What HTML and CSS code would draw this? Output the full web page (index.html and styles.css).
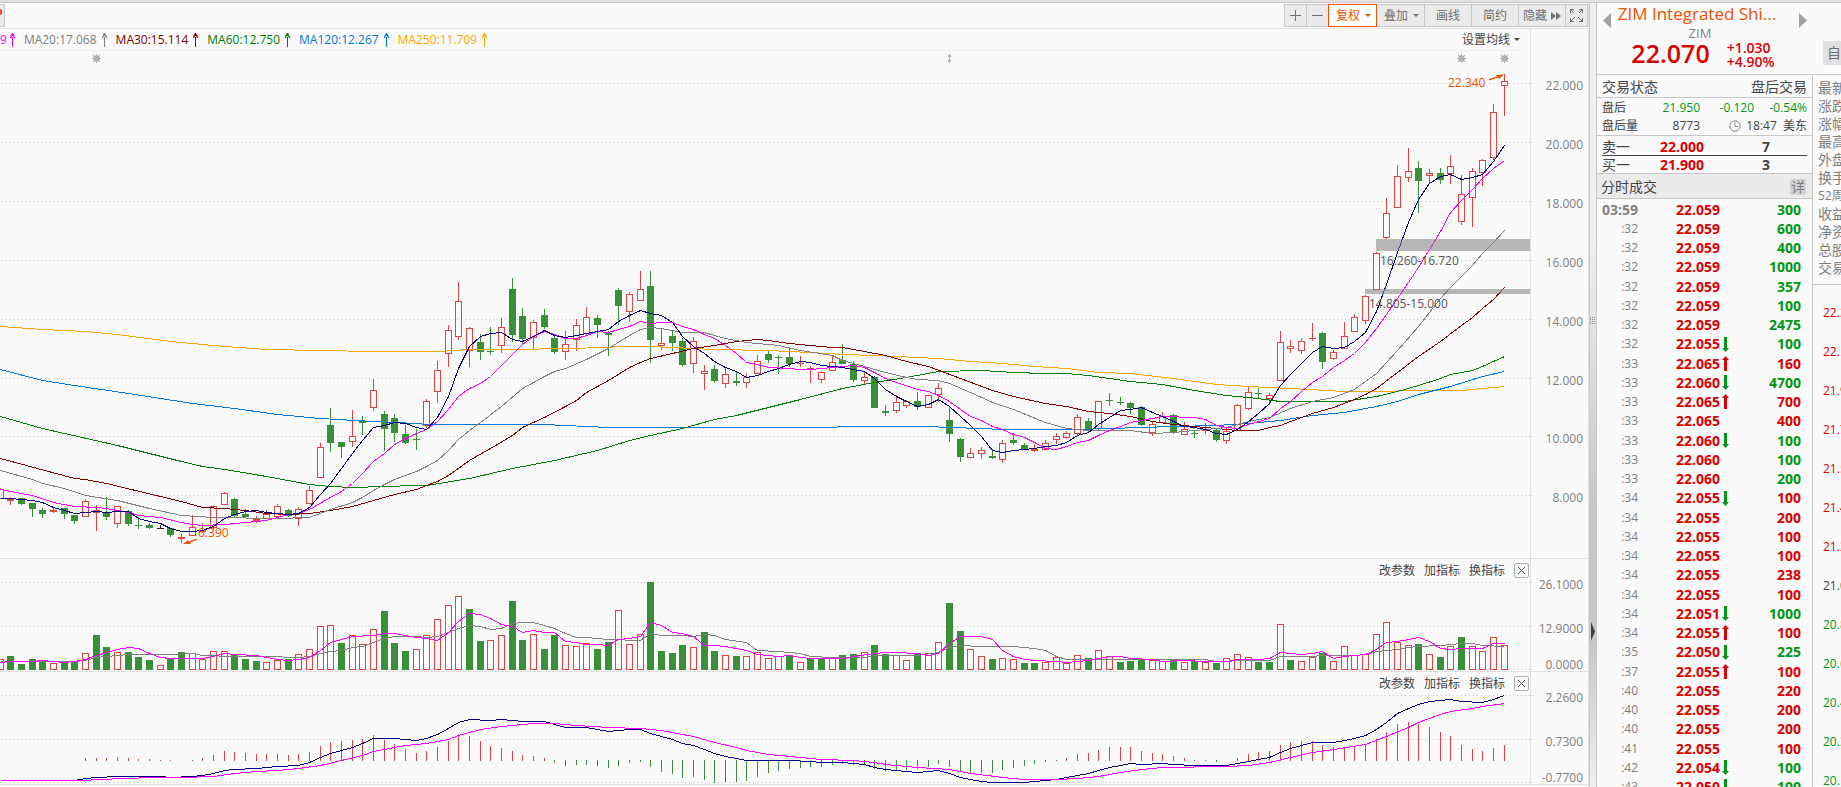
FILE: index.html
```html
<!DOCTYPE html>
<html lang="zh-CN">
<head>
<meta charset="utf-8">
<title>ZIM Integrated Shipping - 日K</title>
<link rel="stylesheet" href="styles.css">
</head>
<body>
<div class="topbar"></div>
<main class="app">
  <section class="charts">
    <div class="toolbar">
      <button class="tool tool-stub" aria-label="周期"><span class="dot"></span></button>
      <div class="tools">
        <button class="tool tool-icon" aria-label="放大"><svg width="11" height="11"><path d="M0 5.5H11M5.5 0V11"/></svg></button>
        <button class="tool tool-icon" aria-label="缩小"><svg width="11" height="11"><path d="M0 5.5H11"/></svg></button>
        <button class="tool tool-wide tool-active">复权<span class="caret"></span></button>
        <button class="tool tool-wide">叠加<span class="caret"></span></button>
        <button class="tool">画线</button>
        <button class="tool">简约</button>
        <button class="tool tool-hide">隐藏<svg width="10" height="8"><path class="fill" d="M0 0L5 4L0 8ZM5 0L10 4L5 8Z"/></svg></button>
        <button class="tool tool-icon" aria-label="全屏"><svg width="13" height="13"><path d="M.5 4V.5H4M.5 .5L4.500 4.500M9 .5H12.500V4M12.500 .5L8.500 4.500M.5 9V12.500H4M.5 12.500L4.500 8.500M9 12.500H12.500V9M12.500 12.500L8.500 8.500"/></svg></button>
      </div>
    </div>
    <div class="pane">
      <div class="pane-head legend">
        <div class="legend-row">
          <span class="ma m10">9<svg width="6" height="14"><use href="#up"/></svg></span>
          <span class="ma m20">MA20:17.068<svg width="6" height="14"><use href="#up"/></svg></span>
          <span class="ma m30">MA30:15.114<svg width="6" height="14"><use href="#up"/></svg></span>
          <span class="ma m60">MA60:12.750<svg width="6" height="14"><use href="#up"/></svg></span>
          <span class="ma m120">MA120:12.267<svg width="6" height="14"><use href="#up"/></svg></span>
          <span class="ma m250">MA250:11.709<svg width="6" height="14"><use href="#up"/></svg></span>
          <button class="link ma-set">设置均线<span class="caret"></span></button>
        </div>
      </div>
      <div class="plot"><svg id="price" width="1588" height="507" viewBox="0 51 1588 507"></svg></div>
    </div>
    <div class="pane">
      <div class="pane-head">
        <button class="link">改参数</button><button class="link">加指标</button><button class="link">换指标</button>
        <button class="close" aria-label="关闭"><svg width="9" height="9"><path d="M1 1L8 8M8 1L1 8"/></svg></button>
      </div>
      <div class="plot"><svg id="volume" width="1588" height="90" viewBox="0 581 1588 90"></svg></div>
    </div>
    <div class="pane">
      <div class="pane-head">
        <button class="link">改参数</button><button class="link">加指标</button><button class="link">换指标</button>
        <button class="close" aria-label="关闭"><svg width="9" height="9"><path d="M1 1L8 8M8 1L1 8"/></svg></button>
      </div>
      <div class="plot"><svg id="macd" width="1588" height="90" viewBox="0 694 1588 90"></svg></div>
    </div>
  </section>

  <div class="splitter">
    <svg class="grip" width="5" height="8"><path d="M.5 0V8M2.500 0V8M4.500 0V8"/></svg>
    <svg class="fold" width="4" height="19"><path d="M0 0L4 9.500L0 19Z"/></svg>
  </div>

  <aside class="side">
    <header class="quote-head">
      <button class="nav" aria-label="上一个"><svg width="8" height="15"><path d="M8 0V15L0 7.500Z"/></svg></button>
      <div class="quote">
        <h1>ZIM Integrated Shi...</h1>
        <div class="code">ZIM</div>
        <div class="last"><strong>22.070</strong><div class="chg"><span>+1.030</span><span>+4.90%</span></div></div>
      </div>
      <button class="nav" aria-label="下一个"><svg width="8" height="15"><path d="M0 0V15L8 7.500Z"/></svg></button>
      <button class="watch">自选</button>
    </header>
    <div class="side-body">
      <div class="book">
        <div class="status"><span>交易状态</span><span>盘后交易</span></div>
        <div class="after">
          <span>盘后</span><span class="down num">21.950</span><span class="down num">-0.120</span><span class="down num">-0.54%</span>
          <span>盘后量</span><span class="num">8773</span>
          <span class="clock num"><svg width="12" height="12"><circle cx="6" cy="6" r="5.200"/><path d="M6 2.500V6.500H9"/></svg>18:47&nbsp; 美东</span>
        </div>
        <div class="level"><span>卖一</span><b class="up">22.000</b><b>7</b></div>
        <div class="level level-bid"><span>买一</span><b class="up">21.900</b><b>3</b></div>
        <div class="ticks-head"><span>分时成交</span><button>详</button></div>
        <table class="ticks">
          <colgroup><col class="c-time"><col class="c-price"><col class="c-dir"><col></colgroup>
          <tbody id="ticks"></tbody>
        </table>
      </div>
      <div class="extra">
        <ul class="facts"><li>最新</li><li>涨跌</li><li>涨幅</li><li>最高</li><li>外盘</li><li>换手</li><li class="latin">52周</li><li>收益</li><li>净资</li><li>总股</li><li>交易</li></ul>
        <ul class="scale">
          <li class="up">22.330</li><li class="up">22.146</li><li class="up">21.962</li><li class="up">21.777</li><li class="up">21.593</li><li class="up">21.409</li><li class="up">21.224</li><li>21.040</li>
          <li class="down">20.856</li><li class="down">20.671</li><li class="down">20.487</li><li class="down">20.303</li><li class="down">20.118</li>
        </ul>
      </div>
    </div>
  </aside>
</main>
<svg class="defs" width="0" height="0"><defs>
  <symbol id="up" viewBox="0 0 6 14"><path d="M2 4H3V14H2Z"/><path d="M2 0H3L5.500 5H4L3 3H2L1 5H-.5Z"/></symbol>
</defs></svg>
<script src="chart.js"></script>
</body>
</html>
```
FILE: styles.css
```css
* { box-sizing: border-box; }
body {
  margin: 0; height: 100vh; overflow: hidden; display: flex; flex-direction: column;
  background: #fafafa; color: #444;
  font: 12px/16px "Open Sans", "Noto Sans CJK SC", sans-serif;
}
button { font: inherit; color: inherit; margin: 0; padding: 0; border: 0; background: none; }
ul { list-style: none; margin: 0; padding: 0; }
svg { display: block; flex: none; }
.defs { position: absolute; }
.up { color: #dc0000; }
.down { color: #009614; }
.topbar { flex: none; height: 3px; background: #e1e1e1; border-bottom: 1px solid #c8c8c8; }
.app { flex: 1; display: flex; min-height: 0; }

.charts { flex: 1; min-width: 0; border-right: 1px solid #e1e1e1; overflow: hidden; }
.toolbar { height: 26px; display: flex; justify-content: space-between; align-items: center; border-bottom: 1px solid #e4e4e4; }
.tools { display: flex; }
.tool {
  height: 23px; width: 48px; margin-left: -1px; display: flex; align-items: center; justify-content: center; gap: 5px;
  background: #ebebeb; border: 1px solid #c8c8c8; color: #707070; font-size: 12px;
}
.tool svg path { fill: none; stroke: #707070; shape-rendering: crispEdges; }
.tool svg path.fill { fill: #707070; stroke: none; shape-rendering: auto; }
.tool-icon { width: 23px; }
.tool-wide { width: 49px; padding-left: 2px; }
.tool-hide { gap: 4px; }
.tool-active { background: #fff; border-color: #f05000; color: #f05000; position: relative; }
.tool-stub { width: 5px; margin: 0; border-left: 0; justify-content: flex-start; align-items: flex-start; }
.dot { width: 2px; height: 6px; margin-top: 4px; background: #f04040; border-radius: 0 3px 3px 0; }
.caret { border: 3px solid transparent; border-top-color: currentColor; border-bottom: 0; }

.pane { border-bottom: 1px solid #e1e1e1; }
.pane-head {
  height: 22px; margin-right: 57px; padding: 1px 1px 0 0; border-right: 1px solid #e1e1e1;
  display: flex; align-items: center; justify-content: flex-end; gap: 9px;
}
.legend { padding: 0 9px 0 0; display: block; }
.legend-row { height: 22px; padding-right: 1px; display: flex; align-items: center; gap: 8px; border-bottom: 1px solid #eee; }
.ma { display: flex; align-items: center; gap: 5px; }
.ma.m10 { gap: 3px; }
.ma svg { fill: currentColor; }
.ma-set { margin-left: auto; display: flex; align-items: center; gap: 4px; }
.close { width: 15px; height: 15px; border: 1px solid #b0b0b0; border-radius: 2px; display: grid; place-items: center; }
.close path { stroke: #555; }
.m5 { color: #000080; } .m10 { color: #f0f; } .m20 { color: #808080; } .m30 { color: #800000; }
.m60 { color: #008000; } .m120 { color: #0078d7; } .m250 { color: #ffa500; }
.plot { display: flex; justify-content: flex-end; }
.plot svg { overflow: visible; }
.plot path, .plot polyline { shape-rendering: crispEdges; }
.plot polyline { fill: none; stroke: currentColor; }
.plot text { font-size: 12px; fill: #808080; }
.plot text.note { fill: #f05000; }
.plot text.gap { fill: #555; }
.grid { stroke: #c8c8c8; stroke-dasharray: 1 3; }
.axis { stroke: #e1e1e1; fill: none; }
.rise { stroke: #e24442; fill: none; }
.rise-fill { fill: #e24442; }
.fall-fill { fill: #389038; }
.flat-fill { fill: #222; }
.gap-band { fill: #808080; fill-opacity: .55; }
.plot path.mark { stroke: #b0b0b0; fill: #b0b0b0; shape-rendering: auto; }
.plot path.pointer { fill: #f05000; stroke: none; shape-rendering: auto; }

.splitter {
  flex: none; width: 8px; position: relative; border: solid #c8c8c8; border-width: 0 1px;
  background: linear-gradient(#f0f0f0 30%, #c8c8c8 64%, #c8c8c8 82%, #f0f0f0);
}
.grip { position: absolute; left: 0; top: 40%; stroke: #888; stroke-dasharray: 1 1; }
.fold { position: absolute; left: 1px; top: 79%; fill: #444; }

.side { flex: none; width: 244px; display: flex; flex-direction: column; overflow: hidden; }
.quote-head { flex: none; height: 72px; padding-left: 6px; display: flex; border-bottom: 1px solid #c8c8c8; overflow: hidden; }
.nav { flex: none; align-self: flex-start; margin-top: 10px; }
.nav path { fill: #a0a0a0; }
.quote { flex: none; width: 188px; text-align: center; }
h1 { margin: 0; font-size: 17px; line-height: 22px; font-weight: 400; color: #f05000; white-space: nowrap; padding-right: 16px; }
.code { font-size: 13px; line-height: 16px; color: #808080; padding-right: 10px; }
.last { display: flex; align-items: flex-start; justify-content: center; gap: 17px; padding-right: 4px; color: #dc0000; }
.last strong { font-size: 25px; line-height: 24px; font-weight: 600; }
.chg { display: flex; flex-direction: column; font-size: 14px; line-height: 14px; font-weight: 600; text-align: left; }
.watch { flex: none; width: 40px; height: 24px; margin: 38px 0 0 16px; background: #e1e1e1; color: #707070; font-size: 14px; text-align: left; padding-left: 4px; }
.side-body { flex: 1; display: flex; min-height: 0; }
.book { width: 216px; border-right: 1px solid #c8c8c8; overflow: hidden; }
.status { height: 23px; padding: 1px 5px 0 5px; display: flex; align-items: center; justify-content: space-between; font-size: 14px; border-bottom: 1px solid #c8c8c8; }
.after {
  height: 38px; padding: 1px 5px 1px 5px; display: grid; grid-template-columns: 46px 52px 54px 1fr; grid-template-rows: 18px 18px;
  align-items: center; border-bottom: 1px solid #c8c8c8;
}
.num { text-align: right; }
.clock { grid-column: 3 / 5; display: flex; align-items: center; justify-content: flex-end; gap: 5px; white-space: nowrap; }
.clock svg { fill: none; stroke: #888; }
.level { margin: 0 5px; height: 20px; display: grid; grid-template-columns: 48px 54px 66px; align-items: end; line-height: 16px; font-size: 14px; border-bottom: 1px solid #444; }
.level b { text-align: right; }
.level-bid { margin: 0; padding: 0 5px; height: 18px; border-bottom: 1px solid #c8c8c8; }
.ticks-head { height: 25px; padding: 1px 6px 0 4px; display: flex; align-items: center; justify-content: space-between; background: #ebebeb; border-bottom: 1px solid #c8c8c8; font-size: 14px; }
.ticks-head button { width: 16px; height: 16px; line-height: 16px; background: #d2d2d2; color: #808080; border-radius: 2px; }
.ticks { width: 100%; table-layout: fixed; border-collapse: collapse; margin-top: 1px; font-size: 14px; line-height: 18px; }
.ticks td { padding: 0; height: 19px; text-align: right; font-weight: 700; }
.ticks tr:nth-child(4n) td { height: 20px; }
.ticks td:first-child { font-weight: 400; font-size: 12px; color: #808080; }
.ticks tr:first-child td:first-child { font-weight: 700; font-size: 14px; }
.ticks td:last-child { padding-right: 11px; }
.ticks svg { margin-left: auto; fill: currentColor; }
.c-time { width: 41px; } .c-price { width: 82px; } .c-dir { width: 9px; }
.extra { flex: 1; overflow: hidden; white-space: nowrap; }
.facts { padding: 4px 0 7px 5px; font-size: 14px; line-height: 18px; color: #808080; border-bottom: 1px solid #c8c8c8; }
.facts .latin { font-size: 12px; }
.scale { padding: 8px 0 0 10px; line-height: 39px; }
```
FILE: chart.js
```js
const x = i => Math.floor(i * 32 / 3);
const parse = s => s.trim().split(/\s+/);

/* one candle per entry: colour, high, body top, body bottom, low */
const candles = parse(`
r,488,489,498,498 r,497,499,500,504 g,498,498,503,504 g,503,503,508,516 g,508,510,513,517 r,507,510,511,512 g,508,508,513,518 g,515,515,520,523 r,499,501,516,516 r,505,510,512,530
g,497,513,516,519 r,506,506,523,527 g,510,511,523,525 g,517,525,525,528 g,523,525,527,528 k,525,528,528,528 g,528,528,534,536 r,534,537,538,542 r,515,527,535,535 r,523,530,531,532
r,505,506,527,529 r,492,493,504,504 g,498,499,515,516 g,509,514,516,517 r,516,519,520,522 r,510,514,518,518 r,504,506,516,517 g,509,510,515,516 r,507,509,518,525 r,486,490,503,503
r,443,447,477,477 g,408,425,442,451 g,442,442,446,457 r,410,436,441,446 g,416,421,422,434 r,379,390,407,410 g,411,414,428,450 g,414,418,432,441 g,425,434,442,443 g,429,439,439,449
r,399,401,425,427 r,361,370,391,402 r,325,330,353,366 r,282,301,336,339 r,327,328,350,366 g,334,342,351,359 g,327,351,351,354 r,318,327,345,352 g,278,289,334,341 g,308,316,338,343
r,320,322,337,349 g,309,315,326,328 g,335,338,351,353 r,331,344,351,359 r,319,325,339,350 r,307,317,333,335 g,315,318,324,337 g,331,333,334,355 g,288,290,305,324 r,292,294,311,321
r,271,289,300,300 g,271,286,339,362 r,328,343,345,349 g,331,336,342,350 g,338,341,364,366 r,337,341,363,372 r,365,371,373,389 g,365,369,380,382 r,367,374,383,387 g,372,381,382,385
r,373,377,382,387 r,355,361,373,373 g,351,354,359,362 g,355,357,357,373 g,349,357,363,366 r,356,363,363,366 r,366,368,369,382 r,371,372,379,382 r,356,362,370,370 g,344,360,363,363
g,361,364,379,381 r,372,377,380,383 g,376,377,407,407 g,405,411,412,415 r,395,402,410,412 r,400,401,405,407 g,392,401,406,409 r,395,395,407,407 r,383,388,394,401 g,407,420,433,441
g,438,439,456,461 r,448,453,457,457 r,447,450,453,458 g,449,456,457,458 r,440,443,459,462 g,433,440,442,444 g,443,445,448,448 r,444,449,450,451 r,440,443,449,449 r,433,436,439,443
r,431,433,437,438 r,414,417,433,434 g,418,421,429,431 r,401,401,428,430 g,393,400,400,405 g,397,402,402,404 g,402,403,407,413 g,406,407,424,425 r,422,424,432,435 r,412,416,422,422
g,414,415,432,433 r,422,429,434,434 g,430,433,433,437 r,423,430,430,433 g,429,430,439,441 r,428,431,440,443 r,404,405,430,430 r,386,392,408,409 g,388,393,393,397 r,393,395,398,404
r,331,342,380,380 r,340,346,348,352 r,338,341,350,353 r,323,338,338,340 g,332,333,361,368 r,350,352,358,359 r,322,336,348,348 r,314,317,331,331 r,295,296,320,323 r,252,253,289,289
r,198,213,237,238 r,165,176,207,207 r,148,171,177,181 g,161,168,180,212 r,169,173,175,183 g,168,173,179,183 r,155,166,173,183 r,175,194,221,224 r,168,171,197,226 r,159,160,172,185
r,104,112,157,159 r,74,81,85,115`).map(s => s.split(","));

/* volume bars: colour and top edge */
const volumes = parse(`
r659 g656 g664 g659 g661 r663 g662 g661 r653 g635 g647 r652 g652 g657 g660 r665 g659 g652 r653 r659 r651 r651 g655 g659 g661 r662 r660 g659 r654 r649
r626 r625 g643 r635 r644 r629 g611 g643 g651 r649 r635 r619 r605 r596 g609 g641 r640 r635 g601 g640 r634 g649 g635 r645 r646 r643 g649 g642 r610 r644
r634 g582 g651 g653 g645 r647 g632 g651 r655 g656 r656 r652 r658 r656 g655 r662 g658 g658 r658 g655 g654 r652 g645 g654 r655 r660 g653 r653 r642 g603
g631 r649 r656 g659 r658 r659 g663 g663 r662 r657 r663 r655 g658 r650 r656 g662 g661 g659 r660 r661 g659 r662 g661 r662 g663 r658 r654 r657 g662 g662
r624 g660 r661 r657 g653 r661 r646 r655 r654 r634 r622 r642 r645 g644 r654 g657 r646 g637 r646 r651 r637 r645`);

/* histogram: outer end of each stick, 0 where there is none */
const sticks = parse(`
0 0 0 0 0 0 0 0 758 758 758 757 758 759 759 760 760 0 760 758 755 751 752 753 754 754 754 755 754 752
746 742 741 740 739 735 740 744 749 753 751 747 741 734 736 741 746 748 751 755 756 758 762 765 764 764 765 767 765 762
761 766 771 773 777 776 779 782 781 781 780 776 772 770 768 767 766 766 764 763 764 764 768 770 770 769 768 766 763 766
771 772 772 772 769 767 765 763 761 760 758 754 753 750 747 747 747 751 753 754 756 758 760 760 761 0 758 754 752 751
745 742 741 741 745 747 747 747 744 739 732 724 722 724 727 732 736 745 749 751 748 745`).map(Number);

/* moving averages with a value for every candle */
const ma5 = parse(`
498 498 499 500 502 507 510 513 512 511 512 511 511 518 521 523 528 531 531 530 526 518 514 511 510 512 513 514 513 507
494 483 468 453 440 427 425 422 423 427 429 417 396 368 346 336 333 332 339 341 336 330 335 337 335 333 331 329 321 315
310 313 315 322 336 346 353 361 367 371 377 375 371 368 364 361 362 365 366 367 369 371 378 389 396 401 406 404 399 406
416 425 436 450 452 450 449 448 446 445 442 435 432 424 417 410 409 407 412 416 421 426 427 429 433 434 429 421 413 403
385 374 363 352 346 348 347 341 332 311 284 252 222 199 183 176 174 179 177 174 161 145`).map((y, i) => [i, +y]);

/* sparse lines: index:y */
const line = s => parse(s).map(p => p.split(":").map(Number));
const ma10 = line(`0:489 2:493 3:495 5:502 7:506 9:507 10:508 12:512 13:515 15:517 17:522 18:524 19:525 21:524 23:522 25:520 27:514 28:513 29:509 31:497 32:491 33:483 34:473 35:461 36:453 37:444 38:438 39:433 40:429 41:421 42:409 43:396 44:388 45:383 46:376 47:365 48:354 49:344 50:336 51:331 52:334 53:338 54:338 55:335 56:331 57:332 58:329 59:326 60:321 61:323 62:322 63:322 64:326 65:329 66:334 67:338 68:345 69:353 70:362 71:364 72:367 74:368 75:369 76:369 77:368 78:367 79:366 80:365 81:367 82:372 83:378 84:382 86:389 87:391 88:395 89:401 90:409 91:416 92:420 93:426 94:429 95:434 96:437 97:442 98:448 99:449 100:446 101:442 102:440 103:435 104:430 105:426 106:422 107:420 109:416 112:417 113:419 114:425 115:427 116:428 117:424 119:418 120:408 121:401 122:391 123:382 124:376 125:367 126:360 127:353 128:342 129:328 130:314 131:298 132:282 133:267 134:249 135:231 136:212 137:200 138:189 139:178 140:168 141:160`);
const ma20 = line(`0:470 3:479 4:483 6:488 8:495 11:500 14:508 17:515 20:517 26:518 29:517 31:509 33:502 34:497 35:490 36:484 37:479 39:471 40:466 41:460 42:450 43:439 44:430 45:422 47:406 49:388 51:376 52:371 53:368 55:359 57:348 59:335 60:329 61:327 62:328 64:332 66:332 67:335 68:338 70:342 72:344 73:345 75:350 78:355 79:360 81:366 83:372 85:377 86:379 88:380 89:383 91:392 93:402 95:409 98:422 100:428 102:430 104:430 106:430 108:433 110:432 113:429 115:427 117:421 119:417 121:408 123:401 125:397 127:389 129:373 131:350 133:326 135:298 136:287 137:276 138:265 139:253 140:242 141:230`);
const ma30 = line(`0:458 7:478 8:479 10:483 15:496 17:501 19:507 21:508 23:510 25:513 27:514 29:513 31:510 33:506 35:500 37:494 39:489 40:485 41:481 42:475 44:460 46:448 48:435 49:427 51:417 53:406 54:400 55:392 57:380 59:367 60:362 61:358 63:353 65:348 67:345 69:341 71:339 72:340 74:343 76:345 78:347 79:347 81:351 83:355 85:361 87:366 90:378 93:390 95:396 98:403 100:406 102:411 104:413 106:416 108:421 110:424 112:426 114:428 116:430 118:430 119:427 120:425 121:421 123:413 125:407 127:399 128:394 129:388 131:372 133:356 135:341 137:325 138:317 139:308 140:299 141:287`);
const ma60 = line(`0:416 4:428 11:445 17:461 19:466 21:469 25:476 29:484 31:486 33:487 36:486 39:485 40:485 44:478 48:468 52:460 56:450 59:440 61:435 64:428 67:419 69:415 72:407 75:399 79:388 82:382 85:377 88:371 92:370 95:372 98:373 100:373 102:375 104:378 106:381 109:384 112:390 115:395 117:397 120:401 126:401 129:396 131:391 133:385 135:378 136:374 138:370 139:366 140:361 141:356`);
const ma120 = line(`0:369 4:380 7:385 12:393 18:403 22:408 26:414 30:418 35:421 39:423 40:424 42:424 51:424 57:427 78:427 79:426 87:426 89:427 92:428 94:429 101:429 104:428 110:426 114:425 117:423 120:420 123:415 126:412 129:406 131:401 133:394 136:386 139:376 141:371`);
const ma250 = line(`0:326 4:329 8:331 11:334 16:341 21:346 25:349 30:350 35:351 41:351 44:349 48:349 53:348 57:347 58:346 61:346 63:347 67:349 72:350 76:352 79:354 82:355 88:358 91:361 94:363 97:366 100:368 103:372 106:373 110:378 114:384 117:386 121:388 126:391 129:391 133:390 137:390 139:388 141:386`);
const vma5 = line(`0:662 1:661 3:661 4:660 6:662 7:661 8:659 9:655 10:652 11:649 12:647 13:648 14:653 15:657 16:658 19:658 20:656 21:653 22:654 24:655 26:659 27:660 28:659 29:657 30:650 31:642 32:639 33:636 35:635 36:633 37:633 38:635 39:637 40:638 41:640 42:632 43:621 44:613 45:614 46:618 47:624 48:626 49:632 50:630 51:632 52:632 53:641 54:642 55:644 56:644 57:645 58:639 59:638 60:636 61:622 62:625 63:632 64:633 65:636 66:645 67:645 68:646 70:650 71:654 73:656 74:655 75:657 76:658 79:658 80:656 82:653 83:652 84:652 86:653 87:655 88:653 89:643 90:636 91:636 92:636 93:639 94:650 95:656 96:659 97:660 99:661 100:662 102:660 104:656 105:656 106:658 108:659 109:661 111:660 113:661 115:661 116:659 118:659 119:658 120:652 122:654 123:653 124:651 125:658 126:656 127:655 128:654 129:649 130:642 131:641 132:639 133:637 134:641 135:648 136:649 137:648 139:648 140:643 141:643`);
const vma10 = line(`0:661 7:661 8:660 9:657 10:656 12:654 16:654 18:653 19:655 22:656 26:656 27:657 28:657 29:656 30:653 31:651 32:650 33:647 34:646 35:642 36:638 37:636 39:636 40:637 41:636 42:632 43:628 44:625 45:626 46:629 47:628 48:623 49:622 50:622 51:625 52:628 53:633 54:637 55:637 57:639 60:640 61:633 62:635 64:635 65:636 66:634 67:635 68:639 70:642 71:650 73:651 75:653 76:656 78:657 81:657 82:655 86:655 88:652 89:647 90:645 92:646 95:646 97:648 98:650 99:656 100:659 113:659 114:661 115:661 116:660 119:660 120:656 123:656 124:655 127:655 128:654 129:651 131:649 132:647 133:646 135:645 137:643 138:643 139:645 141:646`);
const dif = line(`0:780 7:780 8:778 9:777 11:776 15:776 16:777 18:776 19:775 20:773 21:770 22:769 24:768 26:766 28:765 29:762 30:757 31:753 32:750 33:747 34:743 35:738 37:738 38:739 39:740 40:738 41:734 42:728 43:722 44:719 46:720 47:719 48:720 49:721 51:721 52:724 53:727 55:727 56:729 57:731 58:730 59:729 60:729 61:733 62:736 63:739 64:743 65:745 66:749 67:753 68:756 69:758 70:760 74:760 76:761 77:762 79:762 80:763 81:764 82:767 83:769 85:771 86:772 87:771 88:770 89:773 90:777 91:779 92:781 93:782 96:782 97:781 98:780 99:779 100:777 101:775 102:773 103:770 104:767 105:765 106:763 107:764 109:763 110:764 112:765 115:765 116:763 117:761 118:759 119:757 120:752 121:748 122:745 123:742 125:742 126:740 127:738 128:735 129:729 130:722 131:713 132:708 133:704 134:701 136:699 137:701 139:702 140:699 141:695`);
const dea = line(`0:780 8:780 9:779 12:778 14:777 18:777 19:776 20:776 22:773 24:771 26:770 28:768 30:765 32:760 34:755 35:751 37:747 38:745 40:743 42:739 43:735 45:729 47:726 49:724 50:723 52:723 54:725 57:727 60:728 62:730 65:736 67:742 69:747 70:750 72:754 75:757 77:759 80:760 82:762 83:764 86:767 89:769 91:773 94:777 96:779 99:779 101:778 103:776 105:772 107:769 109:767 115:766 117:765 119:762 121:757 123:752 125:749 128:744 130:736 132:727 133:722 135:714 136:711 138:708 139:706 141:703`);

const poly = (cls, pts) => `<polyline class="${cls}" points="${pts.map(([i, y]) => `${x(i) + .5},${y + .5}`).join(" ")}"/>`;
const path = (cls, d) => `<path class="${cls}" d="${d}"/>`;
const box = (c, t, b) => `M${c - 2.5} ${t + .5}h6V${b + .5}h-6Z`;
const solid = (l, t, w, h) => `M${l} ${t}h${w}v${h}h${-w}Z`;

function frame(rows, top, bottom) {
  return rows.map(([y, label, dy]) =>
    path("grid", `M1 ${y + .5}H1530`) + path("axis", `M1531 ${y + .5}h2`) +
    `<text x="1583" y="${y + dy}" text-anchor="end">${label}</text>`).join("") +
    path("axis", `M1530.5 ${top}V${bottom}`);
}

function drawPrice() {
  let rise = "", riseFill = "", fall = "", flat = "";
  candles.forEach(([k, ...v], i) => {
    const [h, t, b, l] = v.map(Number), c = x(i);
    const wick = (h < t ? solid(c, h, 1, t - h) : "") + (l > b ? solid(c, b + 1, 1, l - b) : "");
    const body = solid(c - 3, t, 7, b - t + 1);
    if (k === "g") fall += wick + body;
    else if (k === "k") flat += wick + body;
    else if (b - t < 2) riseFill += wick + body;
    else { riseFill += wick; rise += box(c, t, b); }
  });
  const sun = c => path("mark", `M${c - 2} 56h5v5h-5ZM${c + .5} 54V63M${c - 4} 58.500h9M${c - 3} 55l7 7M${c + 4} 55l-7 7`);
  const grid = [83, 142, 201, 260, 319, 378, 436, 495].map((y, n) => [y, (22 - n * 2).toFixed(3), 7]);
  document.getElementById("price").innerHTML = frame(grid, 51, 558) +
    path("rise", rise) + path("rise-fill", riseFill) + path("fall-fill", fall) + path("flat-fill", flat) +
    poly("m250", ma250) + poly("m120", ma120) + poly("m60", ma60) + poly("m30", ma30) +
    poly("m20", ma20) + poly("m10", ma10) + poly("m5", ma5) +
    path("gap-band", solid(1376, 239, 154, 12) + solid(1365, 289, 165, 5)) +
    `<text class="gap" x="1380" y="265">16.260-16.720</text><text class="gap" x="1369" y="308">14.805-15.000</text>` +
    `<text class="note" x="1448" y="87">22.340</text><text class="note" x="198" y="537">6.390</text>` +
    path("pointer", "M1489 79L1497 76.500L1496 75L1504 74.500L1499 79L1498 77.500L1489 80.500Z M197 538.500L189 541.500L188 540L183 544L191 544L190 542.500L197 540Z") +
    sun(96) + sun(1461) + sun(1504) + path("mark", "M949.500 54.500l1.500 2h-3ZM949.500 62.500l1.500 -2h-3ZM949.500 55V62");
}

function drawVolume() {
  let rise = "", fall = "";
  volumes.forEach((s, i) => {
    const t = +s.slice(1), c = x(i);
    if (s[0] === "r") rise += box(c, t, 669); else fall += solid(c - 3, t, 7, 670 - t);
  });
  document.getElementById("volume").innerHTML =
    frame([[582, "26.1000", 7], [626, "12.9000", 7], [669, "0.0000", 0]], 581, 671) +
    path("rise", rise) + path("fall-fill", fall) + poly("m20", vma10) + poly("m10", vma5);
}

function drawMacd() {
  let rise = "", fall = "";
  sticks.forEach((y, i) => {
    if (y > 760) fall += solid(x(i), 760, 1, y - 759);
    else if (y) rise += solid(x(i), y, 1, 761 - y);
  });
  document.getElementById("macd").innerHTML =
    frame([[695, "2.2600", 7], [739, "0.7300", 7], [782, "-0.7700", 0]], 694, 784) +
    path("rise-fill", rise) + path("fall-fill", fall) + poly("m5", dif) + poly("m10", dea);
}

/* time, price, direction, size, size colour */
const ticks = parse(`
03:59,22.059,,300,d :32,22.059,,600,d :32,22.059,,400,d :32,22.059,,1000,d :32,22.059,,357,d :32,22.059,,100,d :32,22.059,,2475,d :32,22.055,d,100,d
:33,22.065,u,160,u :33,22.060,d,4700,d :33,22.065,u,700,u :33,22.065,,400,u :33,22.060,d,100,d :33,22.060,,100,d :33,22.060,,200,d
:34,22.055,d,100,u :34,22.055,,200,u :34,22.055,,100,u :34,22.055,,100,u :34,22.055,,238,u :34,22.055,,100,u :34,22.051,d,1000,d :34,22.055,u,100,u
:35,22.050,d,225,d :37,22.055,u,100,u :40,22.055,,220,u :40,22.055,,200,u :40,22.055,,200,u :41,22.055,,100,u :42,22.054,d,100,d :43,22.050,d,100,d`);
const tone = { u: "up", d: "down" };
const arrow = {
  u: `<svg width="7" height="15"><path d="M2 4H0L3.500 0L7 4H5V15H2Z"/></svg>`,
  d: `<svg width="7" height="15"><path d="M2 11H0L3.500 15L7 11H5V0H2Z"/></svg>`
};
document.getElementById("ticks").innerHTML = ticks.map(s => {
  const [time, price, dir, size, k] = s.split(",");
  return `<tr><td>${time}</td><td class="up">${price}</td><td class="${tone[dir] || ""}">${arrow[dir] || ""}</td><td class="${tone[k]}">${size}</td></tr>`;
}).join("");

drawPrice();
drawVolume();
drawMacd();
```
